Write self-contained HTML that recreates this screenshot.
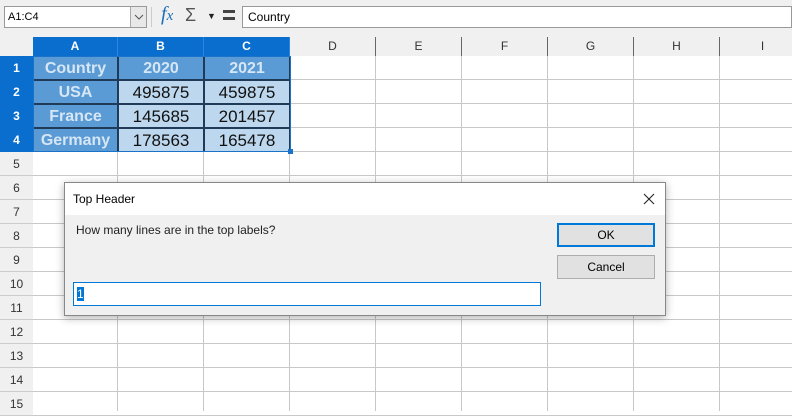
<!DOCTYPE html>
<html><head><meta charset="utf-8"><style>
*{margin:0;padding:0;box-sizing:border-box}
body{width:792px;height:411px;overflow:hidden;background:#fff;font-family:"Liberation Sans",sans-serif;position:relative}
.a{position:absolute}
.tb{left:0;top:0;width:792px;height:37px;background:#f0f0f0}
.hdr{background:#f0f0f0;color:#333;font-size:12px;text-align:center;line-height:19px}
.vl{width:1px;background:#c8c8c8}
.hl{height:1px;background:#c8c8c8}
.cell{font-size:16px;text-align:center;line-height:23px;font-weight:bold}
.dk{background:#5b9bd5;color:#d6e6f5}
.lt{background:#bdd7ee;color:#111;font-weight:normal;font-size:17px}
.btn{background:#e1e1e1;border:1px solid #adadad;font-size:12px;text-align:center;color:#000}
</style></head><body>
<div class="a tb"></div>
<div class="a" style="left:4px;top:6px;width:143px;height:22px;border:1px solid #999;background:#fff;font-size:11px;line-height:20px;padding-left:3px">A1:C4</div>
<div class="a" style="left:130px;top:7px;width:16px;height:20px;background:#e8e8e8;border-left:1px solid #aaa"><svg width="16" height="20"><path d="M4 8 L8 12 L12 8" fill="none" stroke="#555" stroke-width="1"/></svg></div>
<div class="a" style="left:151px;top:7px;width:1px;height:20px;background:#ccc"></div>
<div class="a" style="left:161px;top:3px;font-family:'Liberation Serif',serif;font-style:italic;font-size:20px;color:#1e6fb8">f<span style="font-size:15px">x</span></div>
<div class="a" style="left:185px;top:5px;font-size:18px;color:#555">&Sigma;</div>
<div class="a" style="left:207px;top:11px;font-size:9px;color:#222">&#9660;</div>
<div class="a" style="left:223px;top:10px;width:12px;height:3px;background:#444"></div>
<div class="a" style="left:223px;top:17px;width:12px;height:3px;background:#444"></div>
<div class="a" style="left:242px;top:6px;width:550px;height:22px;border:1px solid #999;background:#fff;font-size:12px;line-height:20px;padding-left:5px">Country</div>
<div id="g"></div>
<div class="a" style="left:64px;top:182px;width:602px;height:134px;background:#f0f0f0;border:1px solid #888;box-shadow:0 2px 8px rgba(0,0,0,.3)">
 <div class="a" style="left:0;top:0;width:600px;height:32px;background:#fff;font-size:12px;line-height:32px;padding-left:8px">Top Header</div>
 <svg class="a" style="left:578px;top:10px" width="12" height="12"><path d="M1 1 L11 11 M11 1 L1 11" stroke="#222" stroke-width="1.1"/></svg>
 <div class="a" style="left:11px;top:40px;font-size:12px;color:#222">How many lines are in the top labels?</div>
 <div class="a btn" style="left:492px;top:40px;width:98px;height:24px;border:2px solid #0078d7;line-height:20px">OK</div>
 <div class="a btn" style="left:492px;top:72px;width:98px;height:24px;line-height:22px">Cancel</div>
 <div class="a" style="left:8px;top:99px;width:468px;height:24px;background:#fff;border:1px solid #0078d7"><span style="position:absolute;left:3px;top:4px;background:#0078d7;color:#fff;font-size:12px;line-height:14px">1</span></div>
</div>
<script>
var g=document.getElementById('g'),h='';
var xs=[33,118,204,290,376,462,548,634,720,806],L='ABCDEFGHI';
h+='<div class="a hdr" style="left:0;top:37px;width:792px;height:19px"></div>';
h+='<div class="a hdr" style="left:0;top:37px;width:33px;height:374px"></div>';
for(var i=0;i<9;i++){var s=i<3;h+='<div class="a hdr" style="left:'+xs[i]+'px;top:37px;width:'+(xs[i+1]-xs[i])+'px;height:19px;'+(s?'background:#0a6ecf;color:#fff;font-weight:bold;border-right:1px solid #2a86e0':'border-right:1px solid #666')+'">'+L[i]+'</div>';
h+='<div class="a vl" style="left:'+(xs[i+1]-1)+'px;top:56px;height:355px"></div>';}
for(var r=0;r<15;r++){var y=56+r*24,s=r<4;h+='<div class="a hdr" style="left:0;top:'+y+'px;width:33px;height:24px;line-height:24px;'+(s?'background:#0a6ecf;color:#fff;font-weight:bold':'border-bottom:1px solid #ccc')+'">'+(r+1)+'</div>';
h+='<div class="a hl" style="left:33px;top:'+(y+23)+'px;width:760px"></div>';}
var d=[['Country','2020','2021'],['USA','495875','459875'],['France','145685','201457'],['Germany','178563','165478']];
for(var r=0;r<4;r++)for(var c=0;c<3;c++){var dk=r==0||c==0;h+='<div class="a cell '+(dk?'dk':'lt')+'" style="left:'+xs[c]+'px;top:'+(56+r*24)+'px;width:'+(xs[c+1]-xs[c])+'px;height:24px;border:1px solid #1f3b57;border-top-color:'+(r==0?'#5b9bd5':'#1f3b57')+'">'+d[r][c]+'</div>';}
h+='<div class="a" style="left:33px;top:56px;width:258px;height:96px;border:1px solid #1a73c8"></div>';
h+='<div class="a" style="left:288px;top:149px;width:5px;height:5px;background:#1a73c8"></div>';
g.innerHTML=h;
</script>
</body></html>
